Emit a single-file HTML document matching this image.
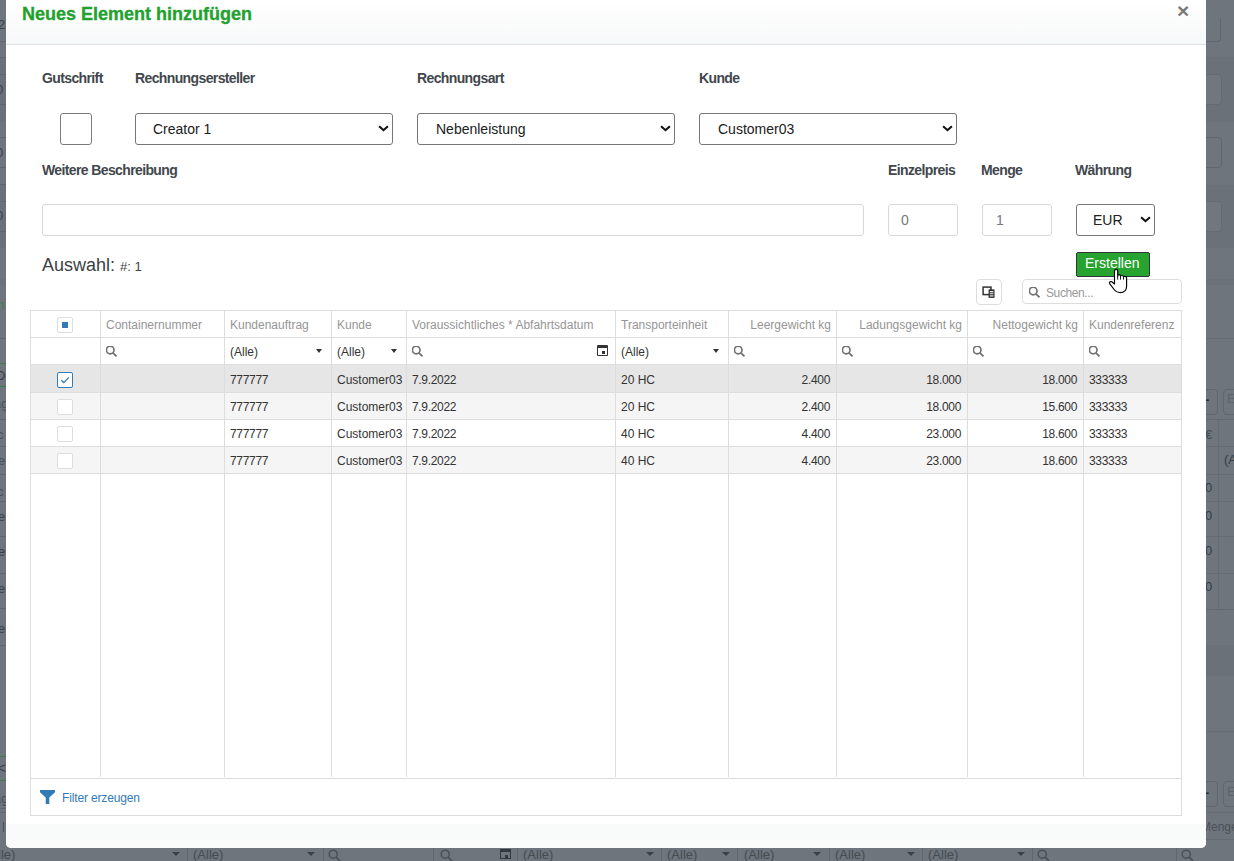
<!DOCTYPE html>
<html><head><meta charset="utf-8"><style>
html,body{margin:0;padding:0;}
body{width:1234px;height:861px;overflow:hidden;position:relative;background:#6e757c;font-family:"Liberation Sans",sans-serif;}
.t{position:absolute;white-space:nowrap;}
#modal{position:absolute;left:6px;top:0;width:1200px;height:848px;background:#fff;border-radius:0 0 5px 5px;overflow:hidden;}
#hdr{position:absolute;left:0;top:0;width:1200px;height:44px;background:linear-gradient(#fff,#f7f8f9);border-bottom:1px solid #dde1e6;}
#ftr{position:absolute;left:0;top:824px;width:1200px;height:24px;background:linear-gradient(#f8f9f9,#fafbfb);}
</style></head><body>
<div style="position:absolute;left:0px;top:57px;width:1234px;height:65px;background:#6a7178;"></div><div style="position:absolute;left:0px;top:185px;width:1234px;height:63px;background:#6a7178;"></div><div style="position:absolute;left:0px;top:279px;width:1234px;height:6px;background:#6b7279;"></div><div style="position:absolute;left:1194px;top:18px;width:26px;height:23px;border-right:1px solid #5f666d;border-bottom:1px solid #5f666d;border-bottom-right-radius:4px;"></div><div style="position:absolute;left:1194px;top:74px;width:26px;height:29px;border:1px solid #646b72;border-radius:4px;background:#70777e;"></div><div style="position:absolute;left:1194px;top:137px;width:26px;height:29px;border:1px solid #5f666d;border-radius:4px;"></div><div style="position:absolute;left:1194px;top:201px;width:26px;height:29px;border:1px solid #646b72;border-radius:4px;background:#70777e;"></div><div style="position:absolute;left:1206px;top:338px;width:28px;height:1px;background:#656c73;"></div><div style="position:absolute;left:1194px;top:389px;width:22px;height:24px;border:1px solid #60676e;border-radius:4px;"></div><div style="position:absolute;left:1223px;top:389px;width:22px;height:24px;border:1px solid #60676e;border-radius:4px;"></div><div style="position:absolute;left:1206px;top:419px;width:28px;height:1px;background:#636a71;"></div><div style="position:absolute;left:1206px;top:446px;width:28px;height:1px;background:#636a71;"></div><div style="position:absolute;left:1206px;top:474px;width:28px;height:1px;background:#636a71;"></div><div style="position:absolute;left:1206px;top:501px;width:28px;height:1px;background:#656c73;"></div><div style="position:absolute;left:1206px;top:536px;width:28px;height:1px;background:#656c73;"></div><div style="position:absolute;left:1206px;top:573px;width:28px;height:1px;background:#656c73;"></div><div style="position:absolute;left:1206px;top:609px;width:28px;height:1px;background:#636a71;"></div><div style="position:absolute;left:1206px;top:645px;width:28px;height:1px;background:#636a71;"></div><div style="position:absolute;left:1218px;top:420px;width:1px;height:189px;background:#656c73;"></div><div style="position:absolute;left:1206px;top:731px;width:28px;height:1px;background:#656c73;"></div><div style="position:absolute;left:1194px;top:781px;width:22px;height:24px;border:1px solid #60676e;border-radius:4px;"></div><div style="position:absolute;left:1223px;top:781px;width:22px;height:24px;border:1px solid #60676e;border-radius:4px;"></div><div style="position:absolute;left:1206px;top:812px;width:28px;height:1px;background:#656c73;"></div><div style="position:absolute;left:1206px;top:839px;width:28px;height:1px;background:#656c73;"></div><div class="t" style="left:1205px;top:480px;font-size:13px;color:#353d46;">0</div><div class="t" style="left:1205px;top:508px;font-size:13px;color:#353d46;">0</div><div class="t" style="left:1205px;top:543px;font-size:13px;color:#353d46;">0</div><div class="t" style="left:1205px;top:579px;font-size:13px;color:#353d46;">0</div><div style="position:absolute;left:1206px;top:645px;width:28px;height:31px;background:#6a7178;"></div><div class="t" style="left:1205px;top:427px;font-size:13px;color:#474e55;">€</div><div class="t" style="left:1224px;top:452px;font-size:13px;color:#353d46;">(A</div><div class="t" style="left:1201px;top:820px;font-size:12px;color:#4a5056;">Menge</div><div class="t" style="left:1205px;top:392px;font-size:13px;font-weight:bold;color:#2a3036;">-</div><div class="t" style="left:1205px;top:785px;font-size:13px;font-weight:bold;color:#2a3036;">-</div><div class="t" style="left:1227px;top:391px;font-size:13px;color:#5d646b;">E</div><div class="t" style="left:1227px;top:784px;font-size:13px;color:#5d646b;">E</div><div style="position:absolute;left:0px;top:41px;width:6px;height:1px;background:#60676e;"></div><div style="position:absolute;left:0px;top:57px;width:6px;height:1px;background:#60676e;"></div><div style="position:absolute;left:0px;top:74px;width:6px;height:1px;background:#60676e;"></div><div style="position:absolute;left:0px;top:104px;width:6px;height:1px;background:#60676e;"></div><div style="position:absolute;left:0px;top:137px;width:6px;height:1px;background:#60676e;"></div><div style="position:absolute;left:0px;top:167px;width:6px;height:1px;background:#60676e;"></div><div style="position:absolute;left:0px;top:184px;width:6px;height:1px;background:#60676e;"></div><div style="position:absolute;left:0px;top:201px;width:6px;height:1px;background:#60676e;"></div><div style="position:absolute;left:0px;top:231px;width:6px;height:1px;background:#60676e;"></div><div style="position:absolute;left:0px;top:338px;width:6px;height:1px;background:#60676e;"></div><div style="position:absolute;left:0px;top:419px;width:6px;height:1px;background:#60676e;"></div><div style="position:absolute;left:0px;top:446px;width:6px;height:1px;background:#60676e;"></div><div style="position:absolute;left:0px;top:474px;width:6px;height:1px;background:#60676e;"></div><div style="position:absolute;left:0px;top:501px;width:6px;height:1px;background:#60676e;"></div><div style="position:absolute;left:0px;top:536px;width:6px;height:1px;background:#60676e;"></div><div style="position:absolute;left:0px;top:573px;width:6px;height:1px;background:#60676e;"></div><div style="position:absolute;left:0px;top:608px;width:6px;height:1px;background:#60676e;"></div><div style="position:absolute;left:0px;top:645px;width:6px;height:1px;background:#60676e;"></div><div style="position:absolute;left:0px;top:808px;width:6px;height:1px;background:#60676e;"></div><div style="position:absolute;left:0px;top:812px;width:6px;height:1px;background:#60676e;"></div><div style="position:absolute;left:0px;top:363px;width:6px;height:1px;background:#3f7a4c;"></div><div style="position:absolute;left:0px;top:386px;width:6px;height:1px;background:#3f7a4c;"></div><div style="position:absolute;left:0px;top:756px;width:6px;height:1px;background:#3f7a4c;"></div><div style="position:absolute;left:0px;top:780px;width:6px;height:1px;background:#3f7a4c;"></div><div class="t" style="left:-2px;top:17px;font-size:13px;color:#3a4047;">2</div><div class="t" style="left:-4px;top:82px;font-size:13px;color:#3a4047;">0</div><div class="t" style="left:-4px;top:145px;font-size:13px;color:#3a4047;">0</div><div class="t" style="left:-4px;top:208px;font-size:13px;color:#3a4047;">0</div><div class="t" style="left:-3px;top:297px;font-size:13px;color:#3a4047;color:#3f7a4c;">n</div><div class="t" style="left:-4px;top:368px;font-size:13px;color:#3a4047;">D</div><div class="t" style="left:-6px;top:396px;font-size:13px;color:#3a4047;color:#4a5057;">ag</div><div class="t" style="left:-3px;top:427px;font-size:13px;color:#3a4047;color:#4a5057;">c</div><div class="t" style="left:-5px;top:453px;font-size:13px;color:#3a4047;color:#4a5057;">le</div><div class="t" style="left:-3px;top:484px;font-size:13px;color:#3a4047;color:#4a5057;">c</div><div class="t" style="left:-2px;top:509px;font-size:13px;color:#3a4047;">e</div><div class="t" style="left:-2px;top:544px;font-size:13px;color:#3a4047;">e</div><div class="t" style="left:-2px;top:581px;font-size:13px;color:#3a4047;">e</div><div class="t" style="left:-2px;top:621px;font-size:13px;color:#3a4047;">e</div><div class="t" style="left:-3px;top:759px;font-size:13px;color:#3a4047;font-size:15px;">&lt;</div><div class="t" style="left:-6px;top:791px;font-size:13px;color:#3a4047;color:#4a5057;">ag</div><div style="position:absolute;left:3px;top:822px;width:1px;height:10px;background:#4a5057;"></div><div style="position:absolute;left:187px;top:848px;width:1px;height:13px;background:#60676e;"></div><div style="position:absolute;left:323px;top:848px;width:1px;height:13px;background:#60676e;"></div><div style="position:absolute;left:433px;top:848px;width:1px;height:13px;background:#60676e;"></div><div style="position:absolute;left:517px;top:848px;width:1px;height:13px;background:#60676e;"></div><div style="position:absolute;left:661px;top:848px;width:1px;height:13px;background:#60676e;"></div><div style="position:absolute;left:737px;top:848px;width:1px;height:13px;background:#60676e;"></div><div style="position:absolute;left:829px;top:848px;width:1px;height:13px;background:#60676e;"></div><div style="position:absolute;left:922px;top:848px;width:1px;height:13px;background:#60676e;"></div><div style="position:absolute;left:1032px;top:848px;width:1px;height:13px;background:#60676e;"></div><div style="position:absolute;left:1176px;top:848px;width:1px;height:13px;background:#60676e;"></div><div class="t" style="left:193px;top:847px;font-size:13px;color:#454b51;">(Alle)</div><div class="t" style="left:523px;top:847px;font-size:13px;color:#454b51;">(Alle)</div><div class="t" style="left:667px;top:847px;font-size:13px;color:#454b51;">(Alle)</div><div class="t" style="left:744px;top:847px;font-size:13px;color:#454b51;">(Alle)</div><div class="t" style="left:835px;top:847px;font-size:13px;color:#454b51;">(Alle)</div><div class="t" style="left:928px;top:847px;font-size:13px;color:#454b51;">(Alle)</div><div class="t" style="left:-15px;top:847px;font-size:13px;color:#454b51;">(Alle)</div><div style="position:absolute;left:172px;top:852px;width:0;height:0;border-left:4px solid transparent;border-right:4px solid transparent;border-top:4px solid #3a4045;"></div><div style="position:absolute;left:307px;top:852px;width:0;height:0;border-left:4px solid transparent;border-right:4px solid transparent;border-top:4px solid #3a4045;"></div><div style="position:absolute;left:646px;top:852px;width:0;height:0;border-left:4px solid transparent;border-right:4px solid transparent;border-top:4px solid #3a4045;"></div><div style="position:absolute;left:722px;top:852px;width:0;height:0;border-left:4px solid transparent;border-right:4px solid transparent;border-top:4px solid #3a4045;"></div><div style="position:absolute;left:813px;top:852px;width:0;height:0;border-left:4px solid transparent;border-right:4px solid transparent;border-top:4px solid #3a4045;"></div><div style="position:absolute;left:907px;top:852px;width:0;height:0;border-left:4px solid transparent;border-right:4px solid transparent;border-top:4px solid #3a4045;"></div><div style="position:absolute;left:1017px;top:852px;width:0;height:0;border-left:4px solid transparent;border-right:4px solid transparent;border-top:4px solid #3a4045;"></div><div style="position:absolute;left:328px;top:849px;line-height:0"><svg width="13" height="13" viewBox="0 0 12 12"><circle cx="4.8" cy="4.8" r="3.7" fill="none" stroke="#4b5157" stroke-width="1.4"/><line x1="7.5" y1="7.5" x2="11" y2="11" stroke="#4b5157" stroke-width="1.6"/></svg></div><div style="position:absolute;left:440px;top:849px;line-height:0"><svg width="13" height="13" viewBox="0 0 12 12"><circle cx="4.8" cy="4.8" r="3.7" fill="none" stroke="#4b5157" stroke-width="1.4"/><line x1="7.5" y1="7.5" x2="11" y2="11" stroke="#4b5157" stroke-width="1.6"/></svg></div><div style="position:absolute;left:1037px;top:849px;line-height:0"><svg width="13" height="13" viewBox="0 0 12 12"><circle cx="4.8" cy="4.8" r="3.7" fill="none" stroke="#4b5157" stroke-width="1.4"/><line x1="7.5" y1="7.5" x2="11" y2="11" stroke="#4b5157" stroke-width="1.6"/></svg></div><div style="position:absolute;left:1181px;top:849px;line-height:0"><svg width="13" height="13" viewBox="0 0 12 12"><circle cx="4.8" cy="4.8" r="3.7" fill="none" stroke="#4b5157" stroke-width="1.4"/><line x1="7.5" y1="7.5" x2="11" y2="11" stroke="#4b5157" stroke-width="1.6"/></svg></div><div style="position:absolute;left:500px;top:849px;width:11px;height:10px;box-sizing:border-box;border:1.5px solid #33393e;border-top-width:3px;"><div style="position:absolute;left:4px;top:3px;width:3px;height:3px;background:#33393e;"></div></div>
<div id="modal"><div id="hdr"></div><div class="t" style="left:16px;top:3px;font-size:18px;font-weight:bold;color:#22a12e;line-height:22px;-webkit-text-stroke:0.3px #22a12e;">Neues Element hinzufügen</div><div class="t" style="left:1171px;top:0px;font-size:21px;font-weight:bold;color:#7a7a7a;line-height:22px;">×</div><div class="t" style="left:36px;top:70px;font-size:14px;font-weight:bold;color:#42474d;line-height:16px;letter-spacing:-0.62px;">Gutschrift</div><div class="t" style="left:129px;top:70px;font-size:14px;font-weight:bold;color:#42474d;line-height:16px;letter-spacing:-0.62px;">Rechnungsersteller</div><div class="t" style="left:411px;top:70px;font-size:14px;font-weight:bold;color:#42474d;line-height:16px;letter-spacing:-0.62px;">Rechnungsart</div><div class="t" style="left:693px;top:70px;font-size:14px;font-weight:bold;color:#42474d;line-height:16px;letter-spacing:-0.62px;">Kunde</div><div style="position:absolute;left:54px;top:113px;width:30px;height:30px;border:1px solid #7b7b7b;border-radius:3px;"></div><div style="position:absolute;left:129px;top:113px;width:256px;height:30px;border:1px solid #767676;border-radius:3px;background:#fff;"><div class="t" style="left:17px;top:6px;font-size:14px;color:#202020;line-height:18px;">Creator 1</div><svg width="11" height="7" viewBox="0 0 11 7" style="position:absolute;right:3.5px;top:11.3px"><path d="M1.1 1.2 L5.5 5.2 L9.9 1.2" fill="none" stroke="#111" stroke-width="2.1"/></svg></div><div style="position:absolute;left:411px;top:113px;width:256px;height:30px;border:1px solid #767676;border-radius:3px;background:#fff;"><div class="t" style="left:18px;top:6px;font-size:14px;color:#202020;line-height:18px;">Nebenleistung</div><svg width="11" height="7" viewBox="0 0 11 7" style="position:absolute;right:3.5px;top:11.3px"><path d="M1.1 1.2 L5.5 5.2 L9.9 1.2" fill="none" stroke="#111" stroke-width="2.1"/></svg></div><div style="position:absolute;left:693px;top:113px;width:256px;height:30px;border:1px solid #767676;border-radius:3px;background:#fff;"><div class="t" style="left:18px;top:6px;font-size:14px;color:#202020;line-height:18px;">Customer03</div><svg width="11" height="7" viewBox="0 0 11 7" style="position:absolute;right:3.5px;top:11.3px"><path d="M1.1 1.2 L5.5 5.2 L9.9 1.2" fill="none" stroke="#111" stroke-width="2.1"/></svg></div><div class="t" style="left:36px;top:162px;font-size:14px;font-weight:bold;color:#42474d;line-height:16px;letter-spacing:-0.62px;">Weitere Beschreibung</div><div class="t" style="left:882px;top:162px;font-size:14px;font-weight:bold;color:#42474d;line-height:16px;letter-spacing:-0.62px;">Einzelpreis</div><div class="t" style="left:975px;top:162px;font-size:14px;font-weight:bold;color:#42474d;line-height:16px;letter-spacing:-0.62px;">Menge</div><div class="t" style="left:1069px;top:162px;font-size:14px;font-weight:bold;color:#42474d;line-height:16px;letter-spacing:-0.62px;">Währung</div><div style="position:absolute;left:36px;top:204px;width:820px;height:30px;border:1px solid #d5d9dd;border-radius:3px;background:#fff;"></div><div style="position:absolute;left:882px;top:204px;width:68px;height:30px;border:1px solid #d5d9dd;border-radius:3px;background:#fff;"><div class="t" style="left:12px;top:6px;font-size:14px;color:#737a80;line-height:18px;">0</div></div><div style="position:absolute;left:976px;top:204px;width:68px;height:30px;border:1px solid #d5d9dd;border-radius:3px;background:#fff;"><div class="t" style="left:13px;top:6px;font-size:14px;color:#737a80;line-height:18px;">1</div></div><div style="position:absolute;left:1070px;top:204px;width:77px;height:30px;border:1px solid #767676;border-radius:3px;background:#fff;"><div class="t" style="left:16px;top:6px;font-size:14px;color:#202020;line-height:18px;">EUR</div><svg width="11" height="7" viewBox="0 0 11 7" style="position:absolute;right:3.5px;top:11.3px"><path d="M1.1 1.2 L5.5 5.2 L9.9 1.2" fill="none" stroke="#111" stroke-width="2.1"/></svg></div><div class="t" style="left:36px;top:254px;font-size:18px;color:#3a3f44;line-height:22px;">Auswahl: <span style="font-size:13px">#: 1</span></div><div style="position:absolute;left:1070px;top:252px;width:72px;height:23px;background:#27a330;border:1px solid #30363c;border-radius:2px;"><div class="t" style="left:8px;top:2px;font-size:14px;color:#fff;line-height:17px;">Erstellen</div></div><div style="position:absolute;left:970px;top:279px;width:24px;height:24px;border:1px solid #ddd;border-radius:4px;background:#fff;"><svg width="26" height="26" viewBox="976 279 26 26" style="position:absolute;left:-1px;top:-1px"><rect x="983.1" y="287.1" width="7.9" height="7.5" fill="#fff" stroke="#333" stroke-width="1.5"/><rect x="988.6" y="289.4" width="5.9" height="8.5" fill="#2a2a2a"/><rect x="989.8" y="291.1" width="3.6" height="1.2" fill="#fff"/><rect x="989.8" y="293.2" width="3.6" height="1.1" fill="#ddd"/><rect x="989.8" y="295" width="3.6" height="1.8" fill="#aaa"/></svg></div><div style="position:absolute;left:1016px;top:279px;width:158px;height:23px;border:1px solid #ddd;border-radius:4px;background:#fff;"><div style="position:absolute;left:6px;top:5px"><svg width="12" height="12" viewBox="0.5 0.5 12 12"><circle cx="4.7" cy="4.5" r="3.8" fill="none" stroke="#707070" stroke-width="1.65"/><line x1="7.4" y1="7.3" x2="11" y2="10.8" stroke="#707070" stroke-width="1.8"/></svg></div><div class="t" style="left:23px;top:6px;font-size:12px;color:#999;line-height:15px;letter-spacing:-0.4px;">Suchen...</div></div><div style="position:absolute;left:24px;top:310px;width:1152px;height:506px;border:1px solid #ddd;box-sizing:border-box;background:#fff;"></div><div style="position:absolute;left:25px;top:365px;width:1150px;height:27px;background:#e6e6e6;"></div><div style="position:absolute;left:25px;top:392px;width:1150px;height:27px;background:#f5f5f5;"></div><div style="position:absolute;left:25px;top:446px;width:1150px;height:27px;background:#f5f5f5;"></div><div style="position:absolute;left:24px;top:337px;width:1151px;height:1px;background:#ddd;"></div><div style="position:absolute;left:24px;top:364px;width:1151px;height:1px;background:#ddd;"></div><div style="position:absolute;left:24px;top:392px;width:1151px;height:1px;background:#ddd;"></div><div style="position:absolute;left:24px;top:419px;width:1151px;height:1px;background:#ddd;"></div><div style="position:absolute;left:24px;top:446px;width:1151px;height:1px;background:#ddd;"></div><div style="position:absolute;left:24px;top:473px;width:1151px;height:1px;background:#ddd;"></div><div style="position:absolute;left:24px;top:365px;width:1151px;height:1px;background:#e8e8e8;"></div><div style="position:absolute;left:24px;top:778px;width:1151px;height:1px;background:#ddd;"></div><div style="position:absolute;left:94px;top:310px;width:1px;height:467px;background:#ddd;"></div><div style="position:absolute;left:218px;top:310px;width:1px;height:467px;background:#ddd;"></div><div style="position:absolute;left:325px;top:310px;width:1px;height:467px;background:#ddd;"></div><div style="position:absolute;left:400px;top:310px;width:1px;height:467px;background:#ddd;"></div><div style="position:absolute;left:609px;top:310px;width:1px;height:467px;background:#ddd;"></div><div style="position:absolute;left:722px;top:310px;width:1px;height:467px;background:#ddd;"></div><div style="position:absolute;left:830px;top:310px;width:1px;height:467px;background:#ddd;"></div><div style="position:absolute;left:961px;top:310px;width:1px;height:467px;background:#ddd;"></div><div style="position:absolute;left:1077px;top:310px;width:1px;height:467px;background:#ddd;"></div><div class="t" style="left:100px;top:318px;font-size:12px;color:#959595;line-height:14px;">Containernummer</div><div class="t" style="left:224px;top:318px;font-size:12px;color:#959595;line-height:14px;">Kundenauftrag</div><div class="t" style="left:331px;top:318px;font-size:12px;color:#959595;line-height:14px;">Kunde</div><div class="t" style="left:406px;top:318px;font-size:12px;color:#959595;line-height:14px;">Voraussichtliches * Abfahrtsdatum</div><div class="t" style="left:615px;top:318px;font-size:12px;color:#959595;line-height:14px;">Transporteinheit</div><div class="t" style="left:722px;top:318px;font-size:12px;color:#959595;line-height:14px;width:103px;text-align:right;">Leergewicht kg</div><div class="t" style="left:830px;top:318px;font-size:12px;color:#959595;line-height:14px;width:126px;text-align:right;">Ladungsgewicht kg</div><div class="t" style="left:961px;top:318px;font-size:12px;color:#959595;line-height:14px;width:111px;text-align:right;">Nettogewicht kg</div><div class="t" style="left:1083px;top:318px;font-size:12px;color:#959595;line-height:14px;">Kundenreferenz</div><div style="position:absolute;left:51px;top:317px;width:14px;height:14px;border:1px solid #ddd;border-radius:2px;background:#fff;"><div style="position:absolute;left:4px;top:4px;width:6px;height:6px;background:#337ab7;"></div></div><div style="position:absolute;left:100px;top:346px;line-height:0"><svg width="12" height="12" viewBox="0.5 0.5 12 12"><circle cx="4.7" cy="4.5" r="3.8" fill="none" stroke="#707070" stroke-width="1.65"/><line x1="7.4" y1="7.3" x2="11" y2="10.8" stroke="#707070" stroke-width="1.8"/></svg></div><div style="position:absolute;left:406px;top:346px;line-height:0"><svg width="12" height="12" viewBox="0.5 0.5 12 12"><circle cx="4.7" cy="4.5" r="3.8" fill="none" stroke="#707070" stroke-width="1.65"/><line x1="7.4" y1="7.3" x2="11" y2="10.8" stroke="#707070" stroke-width="1.8"/></svg></div><div style="position:absolute;left:728px;top:346px;line-height:0"><svg width="12" height="12" viewBox="0.5 0.5 12 12"><circle cx="4.7" cy="4.5" r="3.8" fill="none" stroke="#707070" stroke-width="1.65"/><line x1="7.4" y1="7.3" x2="11" y2="10.8" stroke="#707070" stroke-width="1.8"/></svg></div><div style="position:absolute;left:836px;top:346px;line-height:0"><svg width="12" height="12" viewBox="0.5 0.5 12 12"><circle cx="4.7" cy="4.5" r="3.8" fill="none" stroke="#707070" stroke-width="1.65"/><line x1="7.4" y1="7.3" x2="11" y2="10.8" stroke="#707070" stroke-width="1.8"/></svg></div><div style="position:absolute;left:967px;top:346px;line-height:0"><svg width="12" height="12" viewBox="0.5 0.5 12 12"><circle cx="4.7" cy="4.5" r="3.8" fill="none" stroke="#707070" stroke-width="1.65"/><line x1="7.4" y1="7.3" x2="11" y2="10.8" stroke="#707070" stroke-width="1.8"/></svg></div><div style="position:absolute;left:1083px;top:346px;line-height:0"><svg width="12" height="12" viewBox="0.5 0.5 12 12"><circle cx="4.7" cy="4.5" r="3.8" fill="none" stroke="#707070" stroke-width="1.65"/><line x1="7.4" y1="7.3" x2="11" y2="10.8" stroke="#707070" stroke-width="1.8"/></svg></div><div class="t" style="left:224px;top:345px;font-size:12px;color:#333;line-height:14px;">(Alle)</div><div style="position:absolute;left:310px;top:349px;width:0;height:0;border-left:3.5px solid transparent;border-right:3.5px solid transparent;border-top:4px solid #333;"></div><div class="t" style="left:331px;top:345px;font-size:12px;color:#333;line-height:14px;">(Alle)</div><div style="position:absolute;left:385px;top:349px;width:0;height:0;border-left:3.5px solid transparent;border-right:3.5px solid transparent;border-top:4px solid #333;"></div><div class="t" style="left:615px;top:345px;font-size:12px;color:#333;line-height:14px;">(Alle)</div><div style="position:absolute;left:707px;top:349px;width:0;height:0;border-left:3.5px solid transparent;border-right:3.5px solid transparent;border-top:4px solid #333;"></div><div style="position:absolute;left:591px;top:345px;width:11px;height:11px;box-sizing:border-box;border:1.5px solid #333;border-top-width:3px;border-radius:1px;"><div style="position:absolute;left:4px;top:3px;width:3px;height:3px;background:#333;"></div></div><div style="position:absolute;left:51px;top:372px;width:14px;height:14px;border:1px solid #337ab7;border-radius:2px;background:#fff;"><svg width="14" height="14" viewBox="0 0 14 14" style="position:absolute;left:0;top:0"><path d="M3.2 7.2 L5.8 9.6 L10.8 4.4" fill="none" stroke="#337ab7" stroke-width="1.3"/></svg></div><div class="t" style="left:224px;top:373px;font-size:12px;color:#333;line-height:14px;letter-spacing:-0.33px;">777777</div><div class="t" style="left:331px;top:373px;font-size:12px;color:#333;line-height:14px;">Customer03</div><div class="t" style="left:406px;top:373px;font-size:12px;color:#333;line-height:14px;letter-spacing:-0.33px;">7.9.2022</div><div class="t" style="left:615px;top:373px;font-size:12px;color:#333;line-height:14px;">20 HC</div><div class="t" style="left:722px;top:373px;font-size:12px;color:#333;line-height:14px;letter-spacing:-0.33px;width:102px;text-align:right;">2.400</div><div class="t" style="left:830px;top:373px;font-size:12px;color:#333;line-height:14px;letter-spacing:-0.33px;width:125px;text-align:right;">18.000</div><div class="t" style="left:961px;top:373px;font-size:12px;color:#333;line-height:14px;letter-spacing:-0.33px;width:110px;text-align:right;">18.000</div><div class="t" style="left:1083px;top:373px;font-size:12px;color:#333;line-height:14px;letter-spacing:-0.33px;">333333</div><div style="position:absolute;left:51px;top:399px;width:14px;height:14px;border:1px solid #ddd;border-radius:2px;background:#fff;"></div><div class="t" style="left:224px;top:400px;font-size:12px;color:#333;line-height:14px;letter-spacing:-0.33px;">777777</div><div class="t" style="left:331px;top:400px;font-size:12px;color:#333;line-height:14px;">Customer03</div><div class="t" style="left:406px;top:400px;font-size:12px;color:#333;line-height:14px;letter-spacing:-0.33px;">7.9.2022</div><div class="t" style="left:615px;top:400px;font-size:12px;color:#333;line-height:14px;">20 HC</div><div class="t" style="left:722px;top:400px;font-size:12px;color:#333;line-height:14px;letter-spacing:-0.33px;width:102px;text-align:right;">2.400</div><div class="t" style="left:830px;top:400px;font-size:12px;color:#333;line-height:14px;letter-spacing:-0.33px;width:125px;text-align:right;">18.000</div><div class="t" style="left:961px;top:400px;font-size:12px;color:#333;line-height:14px;letter-spacing:-0.33px;width:110px;text-align:right;">15.600</div><div class="t" style="left:1083px;top:400px;font-size:12px;color:#333;line-height:14px;letter-spacing:-0.33px;">333333</div><div style="position:absolute;left:51px;top:426px;width:14px;height:14px;border:1px solid #ddd;border-radius:2px;background:#fff;"></div><div class="t" style="left:224px;top:427px;font-size:12px;color:#333;line-height:14px;letter-spacing:-0.33px;">777777</div><div class="t" style="left:331px;top:427px;font-size:12px;color:#333;line-height:14px;">Customer03</div><div class="t" style="left:406px;top:427px;font-size:12px;color:#333;line-height:14px;letter-spacing:-0.33px;">7.9.2022</div><div class="t" style="left:615px;top:427px;font-size:12px;color:#333;line-height:14px;">40 HC</div><div class="t" style="left:722px;top:427px;font-size:12px;color:#333;line-height:14px;letter-spacing:-0.33px;width:102px;text-align:right;">4.400</div><div class="t" style="left:830px;top:427px;font-size:12px;color:#333;line-height:14px;letter-spacing:-0.33px;width:125px;text-align:right;">23.000</div><div class="t" style="left:961px;top:427px;font-size:12px;color:#333;line-height:14px;letter-spacing:-0.33px;width:110px;text-align:right;">18.600</div><div class="t" style="left:1083px;top:427px;font-size:12px;color:#333;line-height:14px;letter-spacing:-0.33px;">333333</div><div style="position:absolute;left:51px;top:453px;width:14px;height:14px;border:1px solid #ddd;border-radius:2px;background:#fff;"></div><div class="t" style="left:224px;top:454px;font-size:12px;color:#333;line-height:14px;letter-spacing:-0.33px;">777777</div><div class="t" style="left:331px;top:454px;font-size:12px;color:#333;line-height:14px;">Customer03</div><div class="t" style="left:406px;top:454px;font-size:12px;color:#333;line-height:14px;letter-spacing:-0.33px;">7.9.2022</div><div class="t" style="left:615px;top:454px;font-size:12px;color:#333;line-height:14px;">40 HC</div><div class="t" style="left:722px;top:454px;font-size:12px;color:#333;line-height:14px;letter-spacing:-0.33px;width:102px;text-align:right;">4.400</div><div class="t" style="left:830px;top:454px;font-size:12px;color:#333;line-height:14px;letter-spacing:-0.33px;width:125px;text-align:right;">23.000</div><div class="t" style="left:961px;top:454px;font-size:12px;color:#333;line-height:14px;letter-spacing:-0.33px;width:110px;text-align:right;">18.600</div><div class="t" style="left:1083px;top:454px;font-size:12px;color:#333;line-height:14px;letter-spacing:-0.33px;">333333</div><svg width="15" height="14" viewBox="0 0 15 14" style="position:absolute;left:34px;top:790px"><path d="M0 0 H15 V2.2 L9.3 7.6 V14 H5.7 V7.6 L0 2.2 Z" fill="#337ab7"/></svg><div class="t" style="left:56px;top:791px;font-size:12px;color:#337ab7;line-height:14px;letter-spacing:-0.15px;">Filter erzeugen</div><div id="ftr"></div><svg width="24" height="30" viewBox="1106 266 24 30" style="position:absolute;left:1100px;top:266px"><path d="M1114.5 271 Q1114.5 269.3 1116.1 269.3 Q1117.7 269.3 1117.7 271 L1117.7 276 Q1117.7 274.6 1119.1 274.6 Q1120.5 274.6 1120.5 276.2 Q1120.6 275.5 1122 275.5 Q1123.5 275.5 1123.5 277 Q1123.6 276.4 1125 276.4 Q1126.6 276.4 1126.6 278 L1126.6 286 Q1126.6 292.6 1120 292.6 Q1116.5 292.6 1114.5 290 L1109.8 283.8 Q1109 282.5 1110.2 281.8 Q1111.5 281.2 1112.5 282.2 L1114.5 284 Z" fill="#fff" stroke="#000" stroke-width="1.15" stroke-linejoin="round"/><path d="M1117.7 276 V279.6 M1120.5 276.2 V279.6 M1123.5 277 V279.6" stroke="#000" stroke-width="0.9"/></svg></div>
</body></html>
